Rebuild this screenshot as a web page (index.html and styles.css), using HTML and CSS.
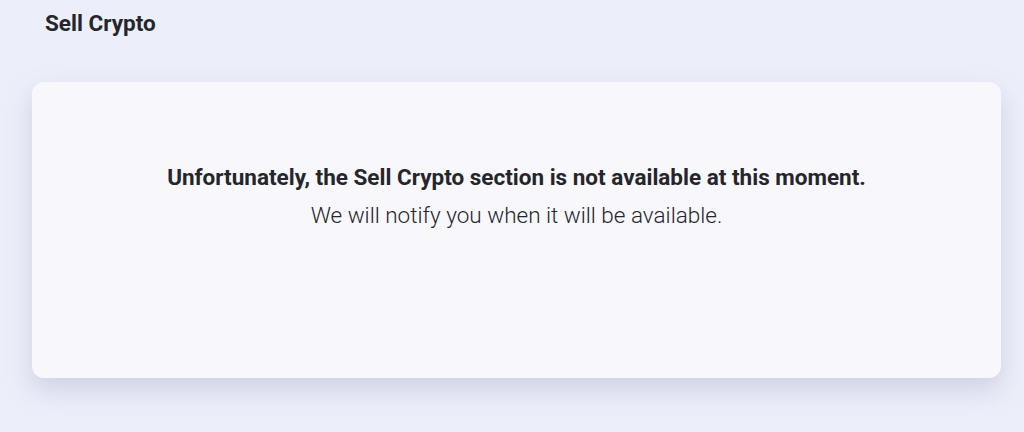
FILE: index.html
```html
<!DOCTYPE html>
<html lang="en">
<head>
<meta charset="utf-8">
<title>Sell Crypto</title>
<link rel="stylesheet" href="styles.css">
</head>
<body>
<div class="page">
  <h1 class="page-title">Sell Crypto</h1>
  <section class="card">
    <p class="card-title">Unfortunately, the Sell Crypto section is not available at this moment.</p>
    <p class="card-sub">We will notify you when it will be available.</p>
  </section>
</div>
</body>
</html>
```
FILE: styles.css
```css
html, body {
  margin: 0;
  padding: 0;
  background: #eceef9;
  font-family: Roboto, "Liberation Sans", sans-serif;
  color: #25262b;
}
.page {
  width: 1024px;
  height: 432px;
  overflow: hidden;
  display: flex;
  flex-direction: column;
  padding: 0 23px 0 32px;
  box-sizing: border-box;
}
.page-title {
  margin: 8px 0 0 13px;
  font-size: 22.5px;
  font-weight: 700;
  line-height: 30px;
}
.card {
  margin-top: 44px;
  height: 296px;
  box-sizing: border-box;
  background: #f8f7fc;
  border-radius: 12px;
  box-shadow: 0 12px 24px rgba(150, 160, 190, 0.35);
  display: flex;
  flex-direction: column;
  align-items: center;
  padding-top: 80px;
}
.card-title {
  margin: 0;
  font-size: 22.5px;
  font-weight: 700;
  line-height: 30px;
}
.card-sub {
  margin: 8px 0 0;
  font-size: 22.5px;
  font-weight: 300;
  line-height: 30px;
}
```
